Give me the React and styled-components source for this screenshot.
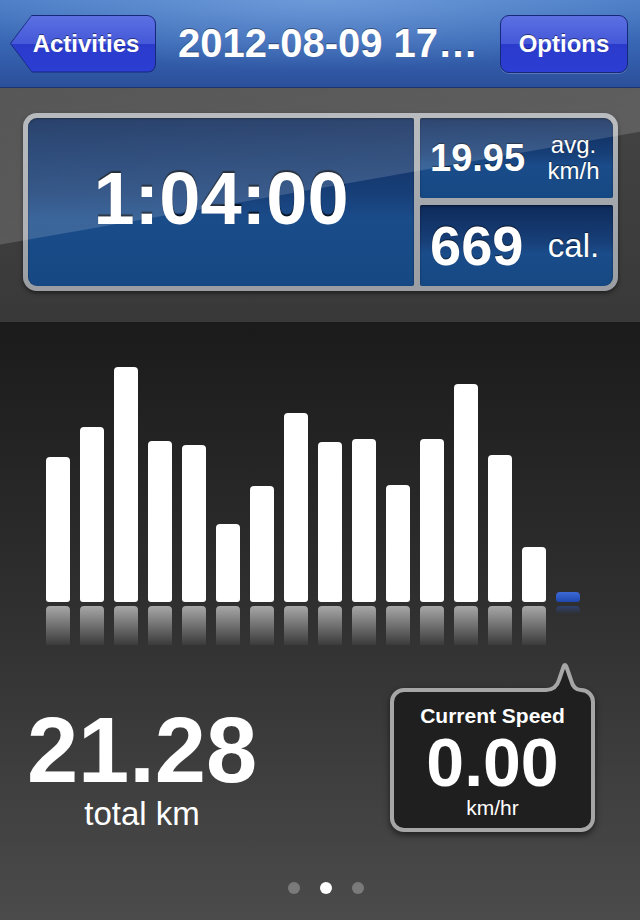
import React from 'react';
import styled, { createGlobalStyle } from 'styled-components';

const GlobalStyle = createGlobalStyle`
  html, body {
    margin: 0;
    padding: 0;
    background: #1b1b1b;
  }
  body {
    font-family: "Liberation Sans", Arial, Helvetica, sans-serif;
  }
`;

const Screen = styled.div`
  width: 640px;
  height: 920px;
  overflow: hidden;
  display: flex;
  flex-direction: column;
`;

/* ---------- navigation bar ---------- */

const NavBar = styled.header`
  height: 88px;
  box-sizing: border-box;
  border-bottom: 1px solid #1c3470;
  display: flex;
  align-items: center;
  padding: 0 12px 0 10px;
  background:
    radial-gradient(ellipse 60% 80% at 50% 0%, rgba(150, 190, 240, 0.45), rgba(150, 190, 240, 0) 100%),
    linear-gradient(#4a7cc5 0%, #3866b3 50%, #2b4f9b 100%);
`;

const BackButton = styled.button`
  width: 146px;
  height: 58px;
  padding: 1px;
  border: none;
  background: #17277a;
  clip-path: polygon(22px 0, 100% 0, 100% 100%, 22px 100%, 0 50%);
  border-radius: 0 9px 9px 0;
  cursor: pointer;
  font: inherit;
`;

const BackFace = styled.span`
  display: flex;
  align-items: center;
  justify-content: center;
  height: 100%;
  box-sizing: border-box;
  padding-left: 6px;
  clip-path: polygon(21px 0, 100% 0, 100% 100%, 21px 100%, 0 50%);
  border-radius: 0 8px 8px 0;
  background: linear-gradient(#5c70e2 0%, #4458d9 50%, #2a3bcc 50%, #2c3ed3 100%);
  color: #fff;
  font-size: 24px;
  font-weight: 700;
  text-shadow: 0 -1px 0 rgba(0, 0, 0, 0.45);
`;

const Title = styled.h1`
  flex: 1;
  margin: 0;
  text-align: center;
  white-space: nowrap;
  color: #fff;
  font-size: 40px;
  font-weight: 700;
  text-shadow: 0 -1px 0 rgba(0, 0, 0, 0.4);
`;

const NavButton = styled.button`
  width: 128px;
  height: 58px;
  border: 1px solid #17277a;
  border-radius: 9px;
  background: linear-gradient(#5c70e2 0%, #4458d9 50%, #2a3bcc 50%, #2c3ed3 100%);
  box-shadow: 0 1px 0 rgba(255, 255, 255, 0.2);
  color: #fff;
  font-family: inherit;
  font-size: 24px;
  font-weight: 700;
  text-shadow: 0 -1px 0 rgba(0, 0, 0, 0.45);
  cursor: pointer;
`;

/* ---------- summary panel ---------- */

const Summary = styled.section`
  position: relative;
  height: 234px;
  box-sizing: border-box;
  padding: 25px 0 0 23px;
  background: linear-gradient(#444444, #393939);

  &::after {
    content: '';
    position: absolute;
    inset: 0;
    pointer-events: none;
    background: linear-gradient(
      170deg,
      rgba(255, 255, 255, 0.1) 0%,
      rgba(255, 255, 255, 0.15) 45%,
      rgba(255, 255, 255, 0) 45.3%
    );
  }
`;

const Frame = styled.div`
  width: 595px;
  box-sizing: border-box;
  padding: 5px;
  border-radius: 14px;
  background: linear-gradient(#aeb1b5, #9a9ea2);
  box-shadow: 0 2px 4px rgba(0, 0, 0, 0.5);
  display: grid;
  grid-template-columns: 386px 193px;
  grid-template-rows: 80px 81px;
  gap: 7px 6px;
`;

const Cell = styled.div`
  display: flex;
  align-items: center;
  background: linear-gradient(#0e2a5a 0%, #173f78 45%, #1a4c8a 60%, #164883 100%);
  box-shadow: inset 0 1px 2px rgba(0, 0, 0, 0.5);
  color: #fff;
`;

const TimeCell = styled(Cell)`
  grid-row: 1 / span 2;
  justify-content: center;
  padding-bottom: 7px;
  box-sizing: border-box;
  border-radius: 9px 2px 2px 9px;
  font-size: 74px;
  font-weight: 700;
  line-height: 1;
  text-shadow: 0 -2px 1px rgba(0, 0, 0, 0.75);
`;

const SideCell = styled(Cell)`
  padding-left: 10px;
  border-radius: ${(p) => (p.$top ? '2px 9px 2px 2px' : '2px 2px 9px 2px')};
`;

const SideValue = styled.span`
  width: ${(p) => p.$w}px;
  font-size: ${(p) => p.$size}px;
  font-weight: 700;
  line-height: 1;
  text-shadow: 0 -1px 1px rgba(0, 0, 0, 0.6);
`;

const SideUnit = styled.span`
  flex: 1;
  text-align: center;
  padding-right: 8px;
  font-size: ${(p) => p.$size}px;
  line-height: 26px;
  text-shadow: 0 -1px 1px rgba(0, 0, 0, 0.5);
`;

/* ---------- chart ---------- */

const Body = styled.main`
  flex: 1;
  display: flex;
  flex-direction: column;
  background: linear-gradient(#1b1b1b 0%, #2e2e2e 45%, #4b4b4b 100%);
`;

const BarRow = styled.div`
  height: 280px;
  display: flex;
  align-items: flex-end;
  gap: 10px;
  padding-left: 46px;
`;

const Bar = styled.div`
  width: 24px;
  height: ${(p) => p.$h}px;
  border-radius: 4px 4px 3px 3px;
  background: ${(p) => (p.$live ? 'linear-gradient(#3d6ad6, #1f48b0)' : '#ffffff')};
`;

const ReflectionRow = styled.div`
  margin-top: 4px;
  height: 39px;
  display: flex;
  align-items: flex-start;
  gap: 10px;
  padding-left: 46px;
`;

const Reflection = styled.div`
  width: 24px;
  height: ${(p) => (p.$live ? 8 : 39)}px;
  border-radius: 4px 4px 0 0;
  background: ${(p) =>
    p.$live
      ? 'linear-gradient(rgba(45, 85, 190, 0.45), rgba(45, 85, 190, 0))'
      : 'linear-gradient(rgba(255, 255, 255, 0.58), rgba(255, 255, 255, 0.04))'};
`;

/* ---------- totals ---------- */

const StatsRow = styled.div`
  margin-top: 43px;
  display: flex;
  align-items: flex-end;
  justify-content: space-between;
  padding: 0 45px 0 32px;
`;

const Total = styled.div`
  width: 220px;
  display: flex;
  flex-direction: column;
  align-items: center;
  color: #fff;
`;

const TotalValue = styled.span`
  font-size: 92px;
  font-weight: 700;
  line-height: 92px;
`;

const TotalLabel = styled.span`
  font-size: 33px;
  line-height: 36px;
`;

const Bubble = styled.div`
  position: relative;
  width: 205px;
  height: 144px;
  box-sizing: border-box;
  border: 4px solid #a6a6a6;
  border-radius: 14px;
  background: #1f1f1f;
  box-shadow: 0 3px 6px rgba(0, 0, 0, 0.55);
  display: flex;
  flex-direction: column;
  align-items: center;
  padding: 12px 0 8px;
  color: #fff;
`;

const Tail = styled.svg`
  position: absolute;
  left: 150px;
  top: -31px;
  width: 44px;
  height: 36px;
  overflow: visible;
`;

const BubbleTitle = styled.span`
  font-size: 21px;
  font-weight: 700;
  line-height: 24px;
`;

const BubbleValue = styled.span`
  margin-top: 6px;
  font-size: 68px;
  font-weight: 700;
  line-height: 56px;
`;

const BubbleUnit = styled.span`
  margin-top: 6px;
  font-size: 21px;
  line-height: 24px;
`;

const Dots = styled.div`
  margin-top: 50px;
  display: flex;
  justify-content: center;
  gap: 20px;
  padding-left: 12px;
`;

const Dot = styled.span`
  width: 12px;
  height: 12px;
  border-radius: 50%;
  background: ${(p) => (p.$active ? '#ffffff' : '#7a7a7a')};
`;

const laps = [145, 175, 235, 161, 157, 78, 116, 189, 160, 163, 117, 163, 218, 147, 55];

export default function App() {
  return (
    <>
      <GlobalStyle />
      <Screen>
        <NavBar>
          <BackButton>
            <BackFace>Activities</BackFace>
          </BackButton>
          <Title>2012-08-09 17…</Title>
          <NavButton>Options</NavButton>
        </NavBar>

        <Summary>
          <Frame>
            <TimeCell>1:04:00</TimeCell>
            <SideCell $top>
              <SideValue $size={38} $w={112}>19.95</SideValue>
              <SideUnit $size={24}>
                avg.
                <br />
                km/h
              </SideUnit>
            </SideCell>
            <SideCell>
              <SideValue $size={56} $w={112}>669</SideValue>
              <SideUnit $size={33}>cal.</SideUnit>
            </SideCell>
          </Frame>
        </Summary>

        <Body>
          <BarRow>
            {laps.map((h, i) => (
              <Bar key={i} $h={h} />
            ))}
            <Bar $live $h={10} />
          </BarRow>
          <ReflectionRow>
            {laps.map((h, i) => (
              <Reflection key={i} />
            ))}
            <Reflection $live />
          </ReflectionRow>

          <StatsRow>
            <Total>
              <TotalValue>21.28</TotalValue>
              <TotalLabel>total km</TotalLabel>
            </Total>
            <Bubble>
              <Tail viewBox="0 0 44 36">
                <path
                  d="M2 29 Q12 29 15 19 L19.5 6 Q21 2 22.5 6 L27 19 Q29.5 29 37 29 L37 36 L2 36 Z"
                  fill="#1f1f1f"
                />
                <path
                  d="M2 29 Q12 29 15 19 L19.5 6 Q21 2 22.5 6 L27 19 Q29.5 29 37 29"
                  fill="none"
                  stroke="#a6a6a6"
                  strokeWidth="4"
                  strokeLinejoin="round"
                />
              </Tail>
              <BubbleTitle>Current Speed</BubbleTitle>
              <BubbleValue>0.00</BubbleValue>
              <BubbleUnit>km/hr</BubbleUnit>
            </Bubble>
          </StatsRow>

          <Dots>
            <Dot />
            <Dot $active />
            <Dot />
          </Dots>
        </Body>
      </Screen>
    </>
  );
}
